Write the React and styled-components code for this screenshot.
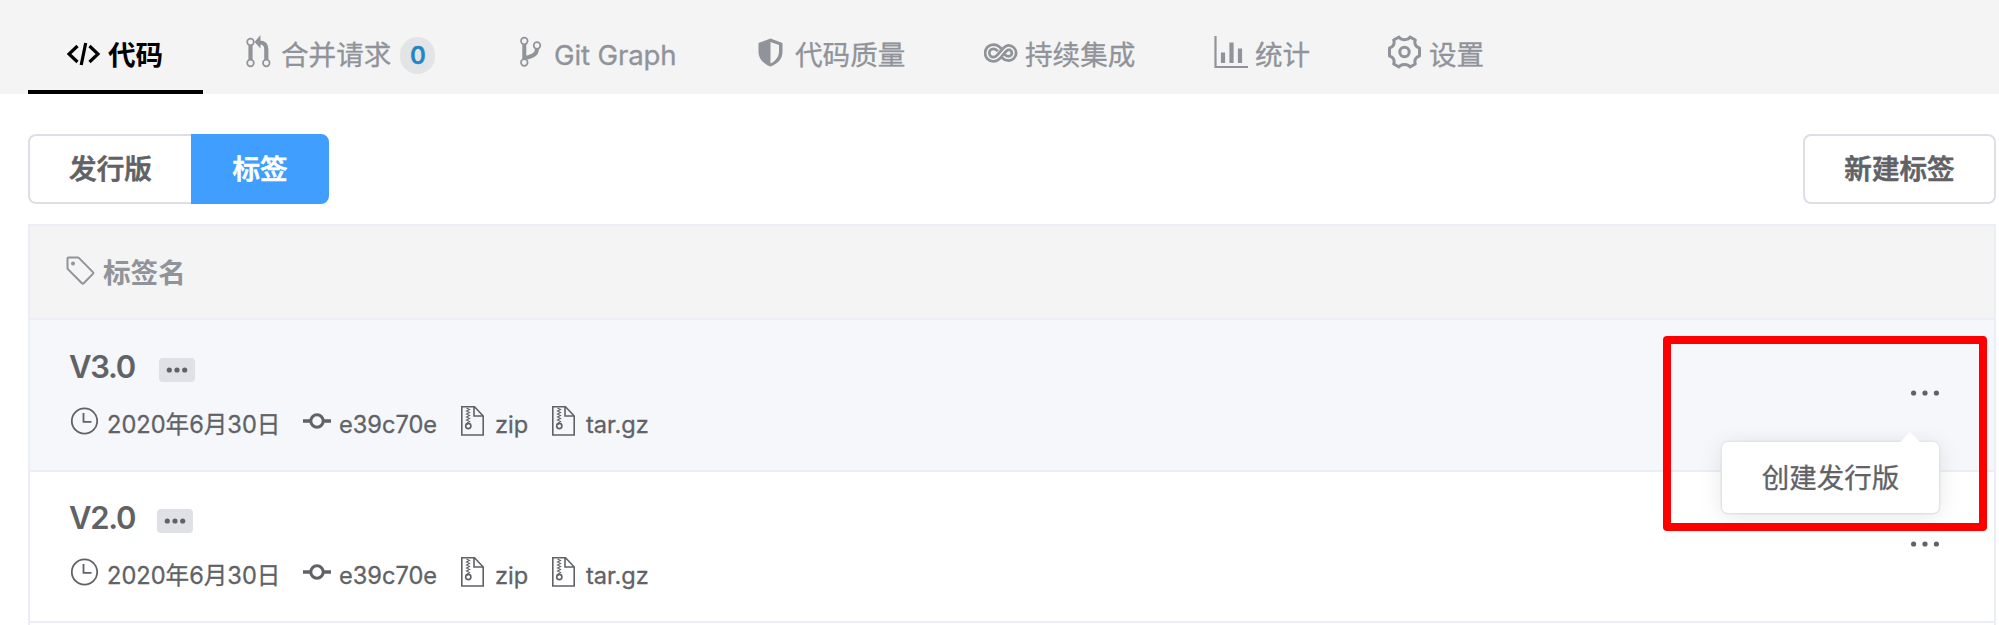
import React from "react";
import styled, { createGlobalStyle, css } from "styled-components";

const GlobalStyle = createGlobalStyle`
  * { box-sizing: border-box; }
  body {
    margin: 0;
    background: #fff;
    font-family: Inter, "Noto Sans CJK SC", sans-serif;
    color: #606266;
    overflow: hidden;
  }
`;

const Page = styled.div`
  width: 1999px;
  height: 625px;
  overflow: hidden;
  position: relative;
`;

const Nav = styled.nav`
  display: flex;
  gap: 4px;
  height: 94px;
  padding-left: 28px;
  background: #f4f4f4;
`;

const Tab = styled.a`
  display: flex;
  align-items: center;
  width: ${(p) => p.$width}px;
  padding: 16px 0 0 39px;
  font-size: 27.6px;
  line-height: 40px;
  color: #909399;
  white-space: nowrap;
  -webkit-text-stroke: 0.3px currentColor;
  svg { flex: none; margin: 0 ${(p) => p.$gap}px ${(p) => p.$lift ?? 6}px 0; }
  ${(p) =>
    p.$active &&
    css`
      color: #000;
      font-weight: 700;
      padding-top: 20px;
      border-bottom: 4px solid #000;
      -webkit-text-stroke: 0;
    `}
`;

const TabLabel = styled.span`
  letter-spacing: ${(p) => p.$spacing || 0}px;
`;

const Count = styled.span`
  display: flex;
  align-items: center;
  justify-content: center;
  width: 35px;
  height: 37px;
  margin: 1px 0 0 9px;
  border-radius: 18px;
  background: #e3e4e6;
  color: #2185c5;
  font-size: 24px;
  font-weight: 600;
  padding-top: 1px;
`;

const Toolbar = styled.div`
  display: flex;
  justify-content: space-between;
  padding: 40px 3px 20px 28px;
`;

const ButtonGroup = styled.div`
  display: flex;
`;

const Button = styled.button`
  height: 70px;
  width: ${(p) => p.$width}px;
  padding: 0;
  border: 2px solid ${(p) => (p.$primary ? "#409eff" : "#dcdfe6")};
  border-right-width: ${(p) => (p.$joined ? 0 : 2)}px;
  border-radius: ${(p) => p.$radius || "8px"};
  background: ${(p) => (p.$primary ? "#409eff" : "#fff")};
  color: ${(p) => (p.$primary ? "#fff" : "#606266")};
  font: 500 27.6px/40px Inter, "Noto Sans CJK SC", sans-serif;
  -webkit-text-stroke: 0.7px currentColor;
`;

const Table = styled.section`
  width: 1968px;
  height: 420px;
  margin-left: 28px;
  border: solid #ebeef5;
  border-width: 2px 2px 0;
`;

const TableHead = styled.header`
  display: flex;
  align-items: center;
  height: 94px;
  padding: 2px 0 0 36px;
  border-bottom: 2px solid #ebeef5;
  background: #f4f4f4;
  color: #909399;
  font-size: 27.6px;
  font-weight: 700;
  line-height: 40px;
  svg { margin: -4px 8px 0 0; }
`;

const Row = styled.article`
  display: flex;
  justify-content: space-between;
  height: ${(p) => p.$height}px;
  padding: ${(p) => p.$top}px 54px 0 40px;
  border-bottom: 2px solid #ebeef5;
  background: ${(p) => (p.$hover ? "#f5f7fb" : "#fff")};
`;

const TitleLine = styled.div`
  display: flex;
  align-items: center;
  height: 40px;
`;

const Title = styled.h2`
  width: ${(p) => p.$width}px;
  margin: 0;
  font-size: 31px;
  font-weight: 600;
  line-height: 40px;
  letter-spacing: -1.3px;
  text-indent: -1px;
`;

const Pill = styled.span`
  display: flex;
  align-items: center;
  justify-content: center;
  width: 36px;
  height: 24px;
  margin-top: 5px;
  border-radius: 4px;
  background: #dfe1e6;
`;

const Meta = styled.div`
  display: flex;
  height: 32px;
  margin-top: 19px;
`;

const MetaItem = styled.span`
  display: flex;
  width: ${(p) => p.$width}px;
  font-size: 23.6px;
  line-height: 37px;
  white-space: nowrap;
  -webkit-text-stroke: 0.3px currentColor;
  svg { flex: none; margin: ${(p) => p.$drop || 0}px ${(p) => p.$gap}px 0 0; }
`;

const MoreButton = styled.button`
  height: 10px;
  margin-top: 41px;
  padding: 0;
  border: 0;
  background: none;
  color: #606266;
  svg { display: block; }
`;

const Popover = styled.div`
  position: absolute;
  left: 1722px;
  top: 442px;
  width: 217px;
  height: 71px;
  padding-top: 1px;
  border-radius: 6px;
  background: #fff;
  box-shadow: 0 3px 24px rgba(0, 0, 0, 0.1), 0 0 0 1.5px #ebeef5;
  font-size: 27.5px;
  line-height: 71px;
  text-align: center;
  -webkit-text-stroke: 0.3px currentColor;
  &::before {
    content: "";
    position: absolute;
    right: 19px;
    top: -10px;
    border: 10px solid transparent;
    border-top: 0;
    border-bottom-color: #fff;
  }
`;

const Highlight = styled.div`
  position: absolute;
  left: 1663px;
  top: 336px;
  width: 324px;
  height: 195px;
  border: 8px solid #fe0000;
  border-radius: 4px;
`;

const CodeIcon = () => (
  <svg width="33" height="24" viewBox="0 0 33 24" fill="none" stroke="currentColor" strokeWidth="3.2">
    <path d="M10.5 4 2 12l8.5 8M22.5 4l8.5 8-8.5 8M18.7 1l-4.5 22" />
  </svg>
);

const MergeIcon = () => (
  <svg width="26" height="34" viewBox="0 0 26 34" fill="none" stroke="currentColor">
    <g strokeWidth="1.7">
      <circle cx="4.5" cy="7" r="3.3" />
      <circle cx="4.5" cy="28" r="3.3" />
      <circle cx="20.3" cy="28" r="3.3" />
    </g>
    <path strokeWidth="4.2" d="M4.5 10.5v14M20.3 24.5V14c0-4-2-6.5-7-6.5" />
    <path fill="currentColor" stroke="none" d="M14.5 0v13.5L8.5 7z" />
  </svg>
);

const BranchIcon = () => (
  <svg width="22" height="32" viewBox="0 0 22 32" fill="none" stroke="currentColor">
    <g strokeWidth="1.7">
      <circle cx="4.3" cy="5" r="3.3" />
      <circle cx="17" cy="9.5" r="3.3" />
      <circle cx="4.3" cy="26.5" r="3.3" />
    </g>
    <path strokeWidth="4" d="M4.3 8.5V23M17 13c0 6-6 7.5-12 9" />
  </svg>
);

const ShieldIcon = () => (
  <svg width="25" height="29" viewBox="0 0 25 29" fill="currentColor">
    <path fillRule="evenodd" d="M12.5.5 24.5 5v9c0 6-4 11.5-12 14.5C4.5 25.5.5 20 .5 14V5zM12.5 4v21.500c5.500-2.800 8.500-7 8.500-12V7z" />
  </svg>
);

const loop = "M15.5 6.800C13.500 4.500 11.500 3.700 9.500 3.700a6 6 0 0 0 0 12.600c3 0 4.700-1.700 7.500-5.300S21.500 5 24.500 4.500a5.500 5.500 0 0 1 0 11c-2 0-3.500-.8-5-2.300";
const InfinityIcon = () => (
  <svg width="34" height="20" viewBox="0 0 34 20" fill="none">
    <path d={loop} stroke="currentColor" strokeWidth="7" />
    <path d={loop} stroke="#f4f4f4" strokeWidth="1.5" />
  </svg>
);

const ChartIcon = () => (
  <svg width="34" height="34" viewBox="0 0 34 34" fill="none" stroke="currentColor">
    <path strokeWidth="2.2" d="M1.5 1v31H34" />
    <path strokeWidth="4.2" d="M9 17.5V28M17.5 7.5V28M26 13.5V28" />
  </svg>
);

const GearIcon = () => (
  <svg width="33" height="34" viewBox="0 0 33 34" fill="none" stroke="currentColor" strokeWidth="3" strokeLinejoin="round">
    <path d="M11 2C12.500 5.500 20.500 5.500 22 2L27.300 5C26 9 28 12.300 31.500 13v8C28 21.700 26 25 27.300 29L22 32C20.500 28.500 12.500 28.500 11 32L5.700 29C7 25 5 21.700 1.500 21v-8C5 12.300 7 9 5.700 5z" />
    <circle cx="16.5" cy="17" r="4.7" />
  </svg>
);

const TagIcon = () => (
  <svg width="29" height="30" viewBox="0 0 29 30" fill="none" stroke="currentColor" strokeWidth="2" strokeLinejoin="round">
    <path d="M2.5 1.5h9.2c.6 0 1 .2 1.4.6l13.8 14c.6.6.6 1.2 0 1.8l-9.2 9.3c-.6.6-1.2.6-1.8 0L2.1 13.400c-.4-.4-.6-.8-.6-1.400V2.500c0-.6.4-1 1-1z" />
    <circle cx="7" cy="7.5" r="2" fill="currentColor" stroke="none" />
  </svg>
);

const ClockIcon = () => (
  <svg width="28" height="28" viewBox="0 0 28 28" fill="none" stroke="currentColor" strokeWidth="1.8">
    <circle cx="14.5" cy="14" r="12.7" />
    <path d="M13.5 6v8.8H21.5" />
  </svg>
);

const CommitIcon = () => (
  <svg width="28" height="28" viewBox="0 0 28 28" fill="none" stroke="currentColor" strokeWidth="3">
    <circle cx="14" cy="14" r="6.2" />
    <path strokeWidth="3.6" d="M0 14h7.5M20.5 14H28" />
  </svg>
);

const ZipIcon = () => (
  <svg width="23" height="30" viewBox="0 0 23 30" fill="none" stroke="currentColor" strokeWidth="1.6">
    <path d="M.8.8h12.7L22.2 10v19H.8zM13 .8V10h9.2" />
    <path strokeWidth="1.1" d="m5.5 2 3 1.5-3 1.5 3 1.5-3 1.5 3 1.5-3 1.5 3 1.5-3 1.5 3 1.5-2 1.2v2" />
    <circle cx="7.3" cy="20" r="2.6" />
  </svg>
);

const Dots = ({ step, r, size }) => (
  <svg width={size} height="10" viewBox={`0 0 ${size} 10`} fill="currentColor">
    {[-1, 0, 1].map((i) => (
      <circle key={i} cx={size / 2 + i * step} cy="5" r={r} />
    ))}
  </svg>
);

const tabs = [
  { label: "代码", Icon: CodeIcon, width: 175, gap: 8, lift: 2, active: true },
  { label: "合并请求", Icon: MergeIcon, width: 270, gap: 9, count: 0 },
  { label: "Git Graph", Icon: BranchIcon, width: 234, gap: 12, spacing: -0.15 },
  { label: "代码质量", Icon: ShieldIcon, width: 222, gap: 12 },
  { label: "持续集成", Icon: InfinityIcon, width: 226, gap: 7, lift: 4 },
  { label: "统计", Icon: ChartIcon, width: 170, gap: 7 },
  { label: "设置", Icon: GearIcon, width: 175, gap: 8 },
];

const TagRow = ({ name, titleWidth, height, top, hover }) => (
  <Row $height={height} $top={top} $hover={hover}>
    <div>
      <TitleLine>
        <Title $width={titleWidth}>{name}</Title>
        <Pill>
          <Dots size={28} step={7.7} r={2.6} />
        </Pill>
      </TitleLine>
      <Meta>
        <MetaItem $width={233} $gap={9} $drop={1}><ClockIcon />2020年6月30日</MetaItem>
        <MetaItem $width={158} $gap={8} $drop={1}><CommitIcon />e39c70e</MetaItem>
        <MetaItem $width={91} $gap={11}><ZipIcon />zip</MetaItem>
        <MetaItem $width={110} $gap={11}><ZipIcon />tar.gz</MetaItem>
      </Meta>
    </div>
    <MoreButton aria-label="更多">
      <Dots size={30} step={11.4} r={2.6} />
    </MoreButton>
  </Row>
);

export default function App() {
  return (
    <Page>
      <GlobalStyle />
      <Nav>
        {tabs.map(({ label, Icon, width, gap, lift, spacing, active, count }) => (
          <Tab key={label} $width={width} $gap={gap} $lift={lift} $active={active}>
            <Icon />
            <TabLabel $spacing={spacing}>{label}</TabLabel>
            {count !== undefined && <Count>{count}</Count>}
          </Tab>
        ))}
      </Nav>
      <Toolbar>
        <ButtonGroup>
          <Button $width={163} $radius="8px 0 0 8px" $joined>发行版</Button>
          <Button $width={138} $radius="0 8px 8px 0" $primary>标签</Button>
        </ButtonGroup>
        <Button $width={193}>新建标签</Button>
      </Toolbar>
      <Table>
        <TableHead>
          <TagIcon />
          标签名
        </TableHead>
        <TagRow name="V3.0" titleWidth={89} height={152} top={27} hover />
        <TagRow name="V2.0" titleWidth={87} height={151} top={26} />
      </Table>
      <Popover>创建发行版</Popover>
      <Highlight />
    </Page>
  );
}
